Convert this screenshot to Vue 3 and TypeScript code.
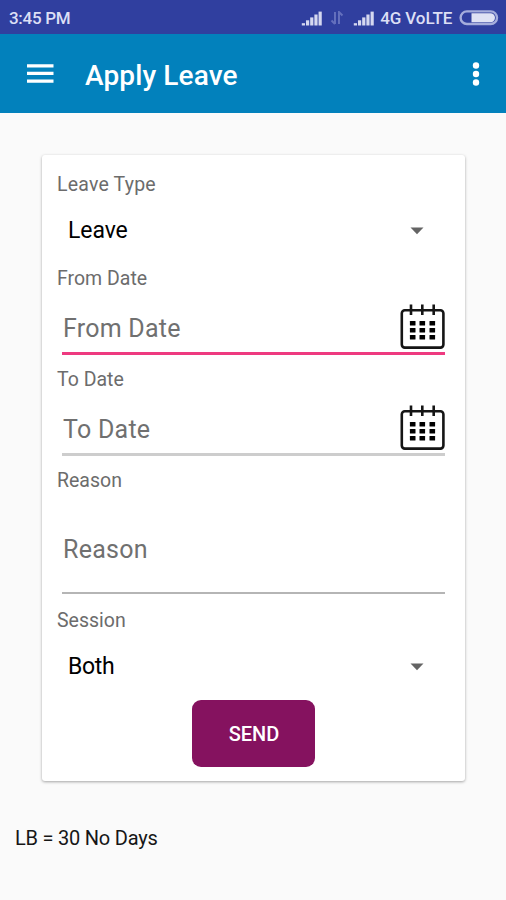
<script setup lang="ts">
import { ref } from 'vue'

interface DateField {
  id: string
  label: string
  focused: boolean
}

const dateFields: DateField[] = [
  { id: 'from', label: 'From Date', focused: true },
  { id: 'to', label: 'To Date', focused: false },
]
const leaveType = ref('Leave')
const session = ref('Both')
const dates = ref<Record<string, string>>({ from: '', to: '' })
const reason = ref('')
const dotColumns = [12.9, 22.5, 32.5]
const dotRows = [18, 25, 32]
const signalBars = [0, 1, 2, 3, 4]
</script>

<template>
  <div class="screen">
    <header class="status">
      <span class="clock">3:45 PM</span>
      <svg class="signal" viewBox="0 0 22 15">
        <rect v-for="i in signalBars" :key="i" :x="0.8 + i * 4.2" :y="12.2 - i * 2.9" width="3.2" :height="2.3 + i * 2.9" />
      </svg>
      <svg class="transfer" viewBox="0 0 14 14">
        <path d="M5 1v12M1.5 9.5 5 13M9 13V1l3.5 3.5" />
      </svg>
      <svg class="signal second" viewBox="0 0 22 15">
        <rect v-for="i in signalBars" :key="i" :x="0.8 + i * 4.2" :y="12.2 - i * 2.9" width="3.2" :height="2.3 + i * 2.9" />
      </svg>
      <span class="network">4G VoLTE</span>
      <svg class="battery" viewBox="0 0 40 16">
        <rect class="shell" x="1.6" y="1.4" width="36.4" height="12.6" rx="6.3" />
        <path class="charge" d="M12.5 3.2H31.5a4.5 4.5 0 0 1 0 9H12.5z" />
      </svg>
    </header>

    <nav class="toolbar">
      <svg class="menu" viewBox="0 0 27 20">
        <path d="M0 1.8h26.5M0 9.4h26.5M0 17.2h26.5" />
      </svg>
      <h1 class="title">Apply Leave</h1>
      <svg class="more" viewBox="0 0 8 26">
        <circle cx="4" cy="4.5" r="3.2" />
        <circle cx="4" cy="13" r="3.2" />
        <circle cx="4" cy="21.5" r="3.2" />
      </svg>
    </nav>

    <form class="card" @submit.prevent>
      <span class="label label-type">Leave Type</span>
      <div class="spinner">
        <span class="value">{{ leaveType }}</span>
        <svg class="arrow" viewBox="0 0 14 8"><path d="M0.5 0.5h13L7 7.3z" /></svg>
      </div>

      <template v-for="field in dateFields" :key="field.id">
        <span class="label">{{ field.label }}</span>
        <div class="date-field">
          <div class="underlined" :class="{ active: field.focused }">
            <input v-model="dates[field.id]" class="input" :placeholder="field.label" />
            <svg class="calendar" viewBox="0 0 48 48">
              <rect class="frame" x="4.8" y="7.2" width="41.6" height="37.4" rx="3" />
              <path class="rings" d="M14 1.5v10.5M25.3 1.5v10.5M36.7 1.5v10.5" />
              <template v-for="y in dotRows" :key="y">
                <rect v-for="x in dotColumns" :key="x" :x="x" :y="y" width="5.6" height="4.5" rx="0.5" />
              </template>
            </svg>
          </div>
        </div>
      </template>

      <span class="label">Reason</span>
      <div class="reason-field">
        <input v-model="reason" class="input" placeholder="Reason" />
      </div>

      <span class="label">Session</span>
      <div class="spinner">
        <span class="value value-session">{{ session }}</span>
        <svg class="arrow" viewBox="0 0 14 8"><path d="M0.5 0.5h13L7 7.3z" /></svg>
      </div>

      <button class="send" type="submit">SEND</button>
    </form>

    <p class="balance">LB = 30 No Days</p>
  </div>
</template>

<style>
body {
  background: #fafafa;
}
</style>

<style scoped>
.screen {
  width: 506px;
  height: 900px;
  overflow: hidden;
  background: #fafafa;
  font-family: Roboto, 'Liberation Sans', sans-serif;
}
.status {
  display: flex;
  align-items: center;
  box-sizing: border-box;
  height: 34px;
  padding: 2px 7px 0 9px;
  background: #303f9f;
  color: #dcdff5;
  font-size: 17px;
  font-weight: 500;
  white-space: nowrap;
}
.clock {
  width: 293px;
  letter-spacing: -0.3px;
}
.signal {
  width: 22px;
  height: 15px;
  fill: #d5d8f0;
}
.transfer {
  width: 14px;
  height: 14px;
  margin-left: 7px;
  fill: none;
  stroke: #6470bd;
  stroke-width: 2;
}
.second {
  margin-left: 9px;
}
.network {
  width: 74px;
  margin-left: 5px;
  letter-spacing: -0.1px;
}
.battery {
  width: 40px;
  height: 16px;
  margin-left: 5px;
  flex: none;
}
.shell {
  fill: none;
  stroke: #a5addc;
  stroke-width: 2.4;
}
.charge {
  fill: #dfe2f4;
}
.toolbar {
  display: flex;
  align-items: center;
  box-sizing: border-box;
  height: 79px;
  padding: 0 26px 0 27px;
  background: #0281bc;
  color: #fff;
}
.menu {
  width: 27px;
  height: 20px;
  stroke: #fff;
  stroke-width: 3.2;
}
.title {
  flex: 1;
  margin: 4px 0 0 31px;
  font-size: 28px;
  font-weight: 500;
  line-height: 36px;
  letter-spacing: 0.12px;
}
.more {
  width: 8px;
  height: 26px;
  fill: #fff;
}
.card {
  display: flex;
  flex-direction: column;
  box-sizing: border-box;
  width: 423px;
  height: 626px;
  margin: 42px 0 0 42px;
  padding: 15px 15px 0;
  border-radius: 3px;
  background: #fff;
  box-shadow: 0 1px 3px rgba(0, 0, 0, 0.35);
}
.label {
  box-sizing: border-box;
  height: 28px;
  padding-top: 1px;
  color: #6c6c6c;
  font-size: 19.5px;
  line-height: 28px;
}
.label-type {
  letter-spacing: 0.2px;
}
.spinner {
  display: flex;
  align-items: center;
  justify-content: space-between;
  height: 66px;
  padding: 0 26px 0 11px;
  color: #000;
  font-size: 23px;
}
.value {
  padding-bottom: 2px;
  letter-spacing: -0.1px;
}
.value-session {
  letter-spacing: -0.3px;
}
.arrow {
  width: 14px;
  height: 8px;
  fill: #646464;
}
.date-field {
  height: 73px;
}
.underlined {
  display: flex;
  align-items: flex-end;
  box-sizing: border-box;
  width: 383px;
  height: 63px;
  margin-left: 5px;
  padding-bottom: 1px;
  border-bottom: 3px solid #cdcdcd;
}
.underlined.active {
  border-bottom-color: #ee3a80;
}
.input {
  min-width: 0;
  flex: 1;
  box-sizing: border-box;
  height: 46px;
  padding: 0 0 0 1px;
  border: 0;
  outline: 0;
  background: transparent;
  color: #000;
  font: 25px Roboto, 'Liberation Sans', sans-serif;
  letter-spacing: 0.25px;
}
.input::placeholder {
  color: #707070;
  opacity: 1;
}
.calendar {
  width: 48px;
  height: 48px;
  flex: none;
}
.frame {
  fill: none;
  stroke: #151515;
  stroke-width: 2.6;
}
.rings {
  stroke: #151515;
  stroke-width: 2.6;
}
.reason-field {
  display: flex;
  align-items: center;
  box-sizing: border-box;
  width: 383px;
  height: 100px;
  margin: 0 0 12px 5px;
  padding-top: 13px;
  border-bottom: 2px solid #b5b5b5;
}
.send {
  width: 123px;
  height: 67px;
  flex: none;
  margin: 0 0 0 135px;
  padding: 0 0 0 1px;
  border: 0;
  border-radius: 9px;
  background: #85125f;
  color: #fff;
  font: 500 20px Roboto, 'Liberation Sans', sans-serif;
}
.balance {
  margin: 43px 0 0 15px;
  color: #161616;
  font-size: 20px;
  line-height: 28px;
  letter-spacing: -0.22px;
}
</style>
